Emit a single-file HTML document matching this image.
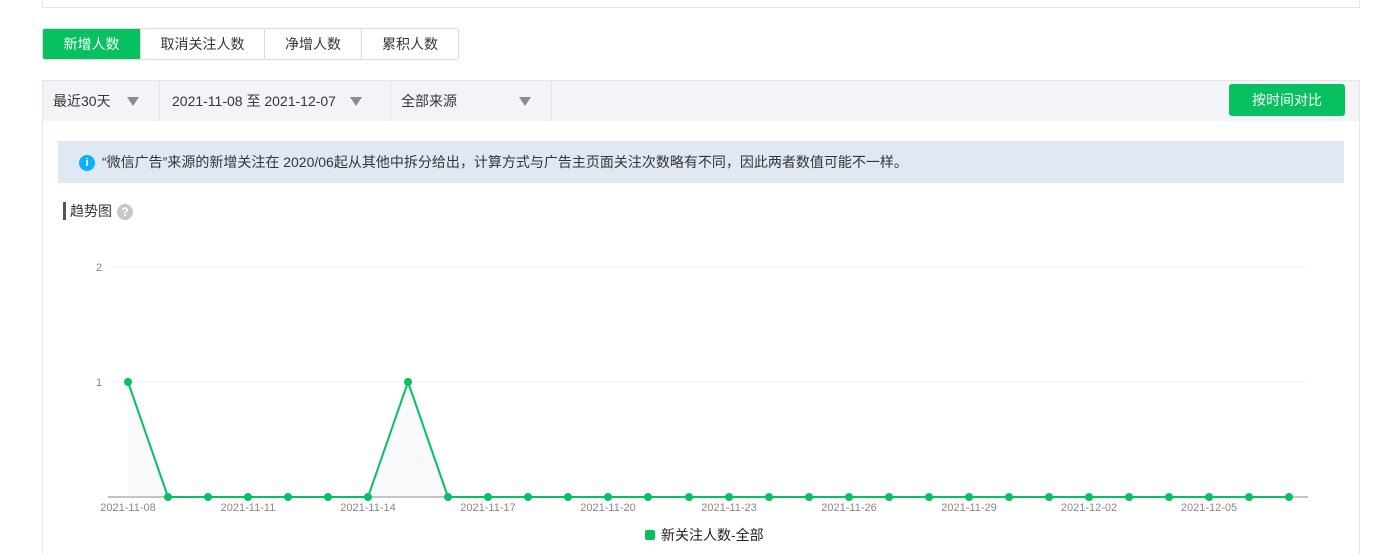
<!DOCTYPE html>
<html><head><meta charset="utf-8"><style>
*{margin:0;padding:0;box-sizing:border-box}
html,body{width:1385px;height:554px;overflow:hidden}
body{background:#fff;font-family:"Liberation Sans","Noto Sans CJK SC",sans-serif;font-size:14px;color:#353535;position:relative}
.topbox{position:absolute;left:42px;top:-2px;width:1318px;height:10px;border:1px solid #e4e6eb;border-top:none}
.tabs{position:absolute;left:42px;top:28px;height:32px;display:flex;border:1px solid #d9dadc;border-radius:3px;overflow:hidden}
.tabs div{height:30px;line-height:30px;text-align:center;border-left:1px solid #d9dadc;font-size:14px}
.tabs div.on{background:#07c160;color:#fff;border-left:none}
.panel{position:absolute;left:42px;top:80px;width:1318px;height:474px;border:1px solid #e4e6eb;border-bottom:none}
.bar{position:absolute;left:0;top:0;width:1316px;height:40px;background:#f3f4f8}
.sel{position:absolute;top:0;height:40px;line-height:40px;border-right:1px solid #e4e6eb;font-size:14px}
.tri{position:absolute;top:16px;width:0;height:0;border-left:6px solid transparent;border-right:6px solid transparent;border-top:9px solid #8d8d8d}
.btn{position:absolute;left:1186px;top:3px;width:116px;height:32px;background:#07c160;color:#fff;border-radius:3px;text-align:center;line-height:32px;font-size:14px}
.info{position:absolute;left:15px;top:60px;width:1286px;height:42px;background:#e0e8f4;font-size:14px;line-height:42px;padding-left:44px;color:#353535;white-space:nowrap}
.ic{position:absolute;left:21px;top:14px;width:16px;height:16px;border-radius:50%;background:#10aeff;color:#fff;font-size:11px;line-height:16px;text-align:center;font-weight:bold}
.title{position:absolute;left:20px;top:121px;font-size:14px;line-height:18px;padding-left:4px;border-left:3px solid #555;white-space:nowrap}
.q{display:inline-block;vertical-align:middle;margin-left:5px;width:16px;height:16px;border-radius:50%;background:#c7c7c7;color:#fff;font-size:12px;line-height:16px;text-align:center;font-weight:bold}
</style></head><body>
<div class="topbox"></div>
<div class="tabs">
<div class="on" style="width:97px">新增人数</div>
<div style="width:124px">取消关注人数</div>
<div style="width:97px">净增人数</div>
<div style="width:97px">累积人数</div>
</div>
<div class="panel">
<div class="bar">
<div class="sel" style="left:0;width:117px;padding-left:10px">最近30天<span class="tri" style="left:84px"></span></div>
<div class="sel" style="left:117px;width:231px;padding-left:12px">2021-11-08 至 2021-12-07<span class="tri" style="left:190px"></span></div>
<div class="sel" style="left:348px;width:161px;padding-left:10px">全部来源<span class="tri" style="left:128px"></span></div>
<div class="btn">按时间对比</div>
</div>
<div class="info"><span class="ic">i</span>“微信广告”来源的新增关注在 2020/06起从其他中拆分给出，计算方式与广告主页面关注次数略有不同，因此两者数值可能不一样。</div>
<div class="title">趋势图<span class="q">?</span></div>
</div>
<svg style="position:absolute;left:0;top:0" width="1385" height="554">
<g font-family="Liberation Sans" font-size="11" fill="#888">
<line x1="108" y1="267" x2="1308" y2="267" stroke="#f2f2f2"/>
<line x1="108" y1="382" x2="1308" y2="382" stroke="#f2f2f2"/>
<text x="96" y="271">2</text><text x="96" y="386">1</text>
<polygon points="128,382 168,497 368,497 408,382 448,497 128,497" fill="#f8f9fb"/>
<line x1="108" y1="497" x2="1308" y2="497" stroke="#c4c4c4" stroke-width="2"/>
<polyline points="128,382 168,497 368,497 408,382 448,497 1289,497" fill="none" stroke="#07c160" stroke-width="2"/>
<g fill="#07c160">
<circle cx="128" cy="382" r="4"/><circle cx="168" cy="497" r="4"/><circle cx="208" cy="497" r="4"/><circle cx="248" cy="497" r="4"/><circle cx="288" cy="497" r="4"/><circle cx="328" cy="497" r="4"/><circle cx="368" cy="497" r="4"/><circle cx="408" cy="382" r="4"/><circle cx="448" cy="497" r="4"/><circle cx="488" cy="497" r="4"/><circle cx="528" cy="497" r="4"/><circle cx="568" cy="497" r="4"/><circle cx="608" cy="497" r="4"/><circle cx="648" cy="497" r="4"/><circle cx="689" cy="497" r="4"/><circle cx="729" cy="497" r="4"/><circle cx="769" cy="497" r="4"/><circle cx="809" cy="497" r="4"/><circle cx="849" cy="497" r="4"/><circle cx="889" cy="497" r="4"/><circle cx="929" cy="497" r="4"/><circle cx="969" cy="497" r="4"/><circle cx="1009" cy="497" r="4"/><circle cx="1049" cy="497" r="4"/><circle cx="1089" cy="497" r="4"/><circle cx="1129" cy="497" r="4"/><circle cx="1169" cy="497" r="4"/><circle cx="1209" cy="497" r="4"/><circle cx="1249" cy="497" r="4"/><circle cx="1289" cy="497" r="4"/>
</g>
<g text-anchor="middle">
<text x="128" y="511">2021-11-08</text><text x="248" y="511">2021-11-11</text><text x="368" y="511">2021-11-14</text><text x="488" y="511">2021-11-17</text><text x="608" y="511">2021-11-20</text><text x="729" y="511">2021-11-23</text><text x="849" y="511">2021-11-26</text><text x="969" y="511">2021-11-29</text><text x="1089" y="511">2021-12-02</text><text x="1209" y="511">2021-12-05</text>
</g>
<rect x="645" y="530" width="10" height="10" rx="2" fill="#07c160"/>
<text x="661" y="540" font-family="Liberation Sans, Noto Sans CJK SC, sans-serif" font-size="14" fill="#222">新关注人数-全部</text>
</g>
</svg>
</body></html>
